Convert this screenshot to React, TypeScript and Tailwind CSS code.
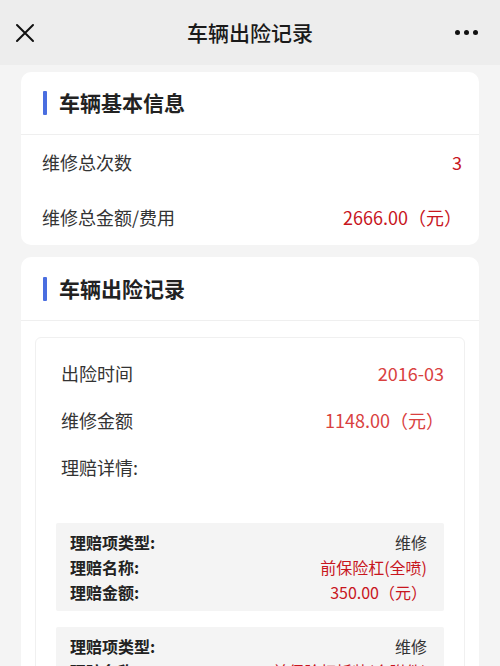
import React from "react";

interface ClaimItem {
  type: string;
  name: string;
  amount: string;
}

const claims: ClaimItem[] = [
  { type: "维修", name: "前保险杠(全喷)", amount: "350.00（元）" },
  { type: "维修", name: "前保险杠拆装(含附件)", amount: "420.00（元）" },
];

function SectionTitle({ title, tall }: { title: string; tall?: boolean }) {
  return (
    <div className={`flex items-center border-b border-[#efefef] pl-[22px] ${tall ? "h-[64px]" : "h-[63px]"}`}>
      <span className="h-6 w-1 rounded-[1px] bg-[#4a6ee0]" />
      <span className="ml-3 text-[21px] font-bold text-[#222]">{title}</span>
    </div>
  );
}

export default function App() {
  return (
    <div
      className="min-h-[666px] w-[500px] overflow-hidden bg-[#f4f4f4]"
      style={{ fontFamily: '"Noto Sans CJK SC", "Noto Sans", sans-serif' }}
    >
      {/* 顶部导航 */}
      <div className="flex h-[65px] items-center justify-between bg-[#ededed] px-4">
        <div className="flex w-12 items-center">
          <svg width="20" height="20" viewBox="0 0 20 20" className="ml-[-1px]">
            <path d="M2 2 L18 18 M18 2 L2 18" stroke="#111" strokeWidth="2" strokeLinecap="round" />
          </svg>
        </div>
        <h1 className="text-[21px] font-medium text-[#1a1a1a]">车辆出险记录</h1>
        <div className="flex w-12 items-center justify-end gap-[4px] pr-[6px]">
          <span className="h-[5px] w-[5px] rounded-full bg-[#111]" />
          <span className="h-[5px] w-[5px] rounded-full bg-[#111]" />
          <span className="h-[5px] w-[5px] rounded-full bg-[#111]" />
        </div>
      </div>

      <div className="flex flex-col gap-3 px-[21px] pt-[7px]">
        {/* 车辆基本信息 */}
        <div className="rounded-[10px] bg-white">
          <SectionTitle title="车辆基本信息" />
          <div className="flex h-[55px] items-center justify-between pl-[21px] pr-[17px] text-[18px]">
            <span className="text-[#333]">维修总次数</span>
            <span className="text-[#c8161e]">3</span>
          </div>
          <div className="flex h-[55px] items-center justify-between pl-[21px] pr-[17px] text-[18px]">
            <span className="text-[#333]">维修总金额/费用</span>
            <span className="text-[#c8161e]">2666.00（元）</span>
          </div>
        </div>

        {/* 车辆出险记录 */}
        <div className="rounded-[10px] bg-white">
          <SectionTitle title="车辆出险记录" tall />
          <div className="px-[14px] pt-4">
            <div className="rounded-[6px] border border-[#f0f0f0] pt-3 pb-4">
              <div className="flex h-[47px] items-center justify-between pl-[25px] pr-[20px] text-[18px]">
                <span className="text-[#333]">出险时间</span>
                <span className="text-[#d9413f]">2016-03</span>
              </div>
              <div className="flex h-[47px] items-center justify-between pl-[25px] pr-[20px] text-[18px]">
                <span className="text-[#333]">维修金额</span>
                <span className="text-[#d9413f]">1148.00（元）</span>
              </div>
              <div className="flex h-[47px] items-center pl-[25px] text-[18px] text-[#333]">理赔详情:</div>

              <div className="mt-[32px] flex flex-col gap-4 px-5">
                {claims.map((c, i) => (
                  <div key={i} className="rounded-[2px] bg-[#f4f4f4] pl-[14px] pr-[17px] pt-[6px] pb-[7px] text-[16px]">
                    <div className="flex h-[25px] items-center justify-between">
                      <span className="font-bold text-[#222]">理赔项类型:</span>
                      <span className="text-[#333]">{c.type}</span>
                    </div>
                    <div className="flex h-[25px] items-center justify-between">
                      <span className="font-bold text-[#222]">理赔名称:</span>
                      <span className="text-[#c8161e]">{c.name}</span>
                    </div>
                    <div className="flex h-[25px] items-center justify-between">
                      <span className="font-bold text-[#222]">理赔金额:</span>
                      <span className="text-[#c8161e]">{c.amount}</span>
                    </div>
                  </div>
                ))}
              </div>
            </div>
          </div>
        </div>
      </div>
    </div>
  );
}
